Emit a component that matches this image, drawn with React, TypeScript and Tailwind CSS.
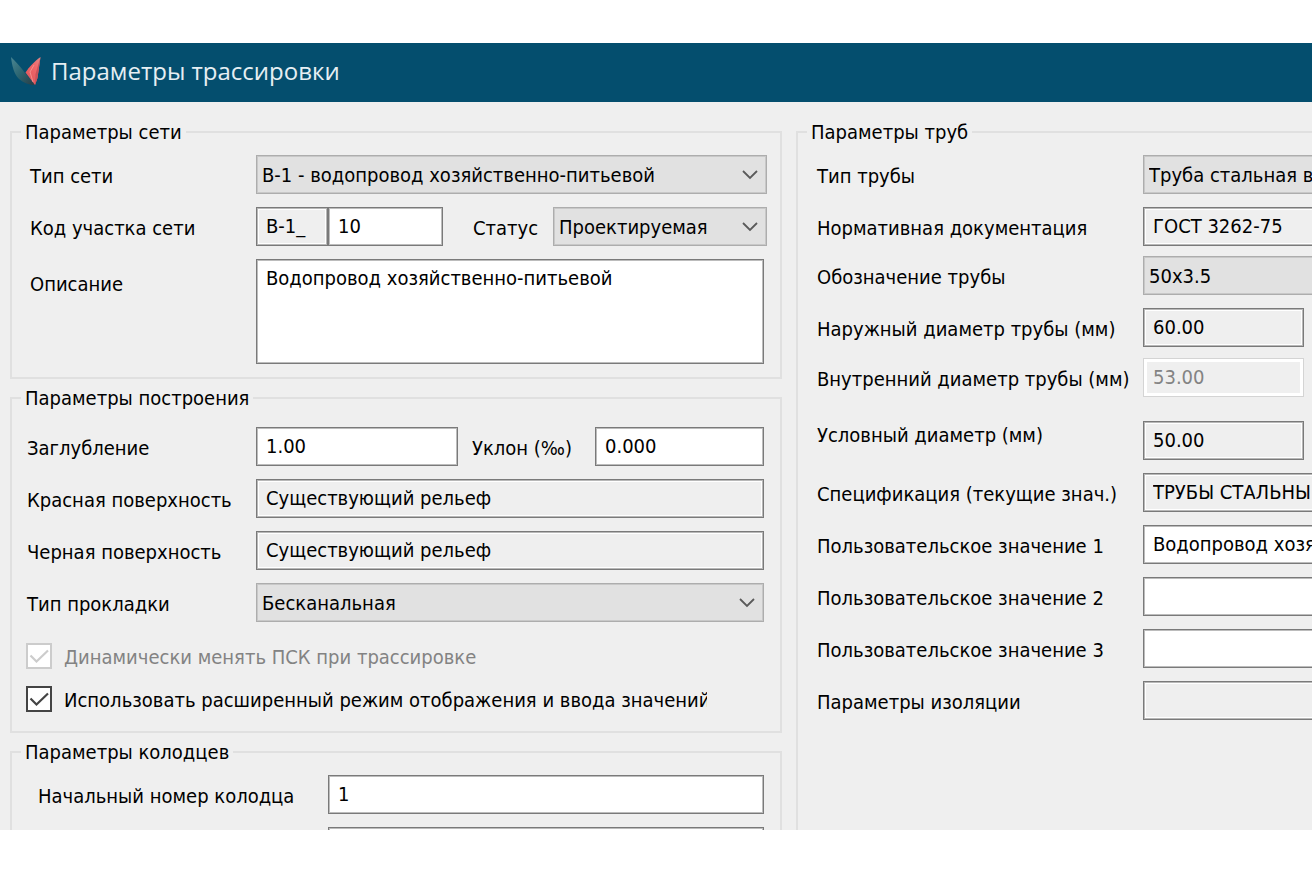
import { useState, type ReactNode } from 'react'
import clsx from 'clsx'

const TEXT = "font-['DejaVu_Sans_Condensed','DejaVu_Sans',sans-serif] text-[20px] leading-[24px]"

function Group({ title, open, className, children }: { title: string; open?: boolean; className?: string; children: ReactNode }) {
  return (
    <fieldset className={clsx('min-w-0 border-2 border-[#e0e0e0] px-[9px]', open && 'border-r-0 pr-0', className)}>
      <legend className="px-1">{title}</legend>
      {children}
    </fieldset>
  )
}

function Label({ id, className, children }: { id: string; className?: string; children: ReactNode }) {
  return <label htmlFor={id} className={clsx('shrink-0 whitespace-nowrap pt-[2px]', className)}>{children}</label>
}

type InputProps = { id: string; value?: string; readOnly?: boolean; disabled?: boolean; className?: string; label?: string }

function Input({ id, value = '', readOnly, disabled, className, label }: InputProps) {
  return (
    <input
      id={id}
      type="text"
      aria-label={label}
      defaultValue={value}
      readOnly={readOnly}
      disabled={disabled}
      className={clsx(
        'h-[39px] min-w-0 border pb-[2px] pl-[9px] outline-none',
        disabled && 'border-[#d4d4d4] bg-[#efefef] text-[#838383] shadow-[inset_0_0_0_3px_#fff]',
        readOnly && 'border-[#7a7a7a] bg-[#efefef] shadow-[inset_0_0_0_1px_#b8b8b8,inset_0_0_0_2px_#fff]',
        !readOnly && !disabled && 'border-[#7a7a7a] bg-white shadow-[inset_0_0_0_1px_#bcbcbc]',
        className,
      )}
    />
  )
}

function Select({ id, options, open, className }: { id: string; options: string[]; open?: boolean; className?: string }) {
  return (
    <div className={clsx('relative flex min-w-0', className)}>
      <select id={id} className={clsx('h-[39px] w-full min-w-0 appearance-none border border-[#adadad] bg-[#e1e1e1] pl-[5px] shadow-[inset_0_0_0_1px_#c8c8c8] outline-none', !open && 'pr-8')}>
        {options.map(o => <option key={o}>{o}</option>)}
      </select>
      {!open && (
        <svg viewBox="0 0 16 10" className="pointer-events-none absolute top-[15px] right-[9px] h-[10px] w-4" fill="none" stroke="#5a5a5a" strokeWidth="1.8">
          <path d="M1 1 L8 8 L15 1" />
        </svg>
      )}
    </div>
  )
}

function Check({ id, checked, disabled, className, children }: { id: string; checked: boolean; disabled?: boolean; className?: string; children: ReactNode }) {
  const [on, setOn] = useState(checked)
  return (
    <div className={clsx('flex h-[26px] items-center gap-3', disabled && 'text-[#838383]')}>
      <span className="relative flex shrink-0">
        <input id={id} type="checkbox" checked={on} disabled={disabled} onChange={e => setOn(e.target.checked)}
          className={clsx('size-[26px] appearance-none border-2 bg-white', disabled ? 'border-[#cccccc]' : 'border-[#444444]')} />
        {on && (
          <svg viewBox="0 0 26 26" className="pointer-events-none absolute inset-0 size-[26px]" fill="none" stroke={disabled ? '#cccccc' : '#444444'} strokeWidth="2.2">
            <path d="M4.5 12.5 L10.5 18.5 L22 7.5" />
          </svg>
        )}
      </span>
      <label htmlFor={id} className={clsx('overflow-hidden whitespace-nowrap pt-[2px]', className)}>{children}</label>
    </div>
  )
}

function Logo() {
  return (
    <svg viewBox="0 0 30 29" className="h-[29px] w-[30px]">
      <defs>
        <linearGradient id="wing" x1="0" y1="0" x2="1" y2="1">
          <stop offset="0" stopColor="#4b8794" />
          <stop offset="0.5" stopColor="#2b6470" />
          <stop offset="1" stopColor="#2a3a42" />
        </linearGradient>
        <linearGradient id="blade" x1="1" y1="0" x2="0.4" y2="1">
          <stop offset="0" stopColor="#d98a8c" />
          <stop offset="0.4" stopColor="#f0686a" />
          <stop offset="1" stopColor="#e0565b" />
        </linearGradient>
      </defs>
      <path d="M0 0 C5 5 10 10 14 16 L24 28 C18 28 13 26 8 22 C3 17 1 9 0 0 Z" fill="url(#wing)" />
      <path d="M29.5 0 C24 4 18 10 14.5 15.5 L24 28 L26.5 21 Z" fill="url(#blade)" />
      <path d="M29.5 0 L26.5 21 L24 28 L24.5 17 Z" fill="#c9525a" />
      <path d="M23 8 L19 15 L22 25" fill="none" stroke="#f59a97" strokeWidth="0.8" />
    </svg>
  )
}

type PipeRow = { id: string; label: string; value?: string; options?: string[]; readOnly?: boolean; disabled?: boolean; short?: boolean; top?: boolean }

const pipeGroups: { gap: string; rows: PipeRow[] }[] = [
  {
    gap: 'mt-[11px]',
    rows: [
      { id: 'pipe-type', label: 'Тип трубы', options: ['Труба стальная водогазопроводная'] },
      { id: 'pipe-doc', label: 'Нормативная документация', value: 'ГОСТ 3262-75', readOnly: true },
    ],
  },
  {
    gap: 'mt-[10px]',
    rows: [
      { id: 'pipe-mark', label: 'Обозначение трубы', options: ['50x3.5'] },
      { id: 'pipe-outer', label: 'Наружный диаметр трубы (мм)', value: '60.00', readOnly: true, short: true },
    ],
  },
  {
    gap: 'mt-[11px]',
    rows: [{ id: 'pipe-inner', label: 'Внутренний диаметр трубы (мм)', value: '53.00', disabled: true, short: true }],
  },
  {
    gap: 'mt-[24px]',
    rows: [
      { id: 'pipe-nominal', label: 'Условный диаметр (мм)', value: '50.00', readOnly: true, short: true, top: true },
      { id: 'pipe-spec', label: 'Спецификация (текущие знач.)', value: 'ТРУБЫ СТАЛЬНЫЕ', readOnly: true },
      { id: 'pipe-user1', label: 'Пользовательское значение 1', value: 'Водопровод хозяйственно-питьевой' },
      { id: 'pipe-user2', label: 'Пользовательское значение 2' },
      { id: 'pipe-user3', label: 'Пользовательское значение 3' },
      { id: 'pipe-insulation', label: 'Параметры изоляции', readOnly: true },
    ],
  },
]

// long fields run past the right edge of the window
function PipeField({ row }: { row: PipeRow }) {
  return (
    <div className={clsx('flex', row.top ? 'items-start' : 'items-center')}>
      <Label id={row.id} className="w-[326px]">{row.label}</Label>
      {row.options
        ? <Select id={row.id} options={row.options} open className="-mr-2 flex-1" />
        : <Input id={row.id} value={row.value} readOnly={row.readOnly} disabled={row.disabled} className={row.short ? 'w-[161px]' : '-mr-2 flex-1'} />}
    </div>
  )
}

export default function App() {
  return (
    <div className="flex h-screen flex-col bg-white pt-[43px] pb-[42px]">
      <div className={clsx('flex min-h-0 flex-1 flex-col overflow-hidden bg-[#efefef] text-black', TEXT)}>
        <header className="flex h-[59px] shrink-0 items-center gap-[10px] bg-[#044e6e] pb-[3px] pl-[11px]">
          <Logo />
          <h1 className="font-['Open_Sans','Noto_Sans',sans-serif] text-[24px] leading-[32px] text-[#e6eff3]">Параметры трассировки</h1>
        </header>

        <main className="grid flex-1 grid-cols-[minmax(0,772fr)_minmax(0,516fr)] gap-[14px] pt-[18px] pl-[10px]">
          <div className="flex flex-col gap-[7px]">
            <Group title="Параметры сети" className="pb-[13px]">
              <div className="mt-[11px] flex flex-col gap-[13px] pr-1 pl-[9px]">
                <div className="flex items-center">
                  <Label id="net-type" className="w-[226px]">Тип сети</Label>
                  <Select id="net-type" options={['В-1 - водопровод хозяйственно-питьевой']} className="flex-1" />
                </div>
                <div className="flex items-center">
                  <Label id="net-prefix" className="w-[226px]">Код участка сети</Label>
                  <Input id="net-prefix" value="В-1_" readOnly className="w-[72px]" />
                  <Input id="net-code" label="Номер участка" value="10" className="w-[115px]" />
                  <Label id="net-status" className="ml-[30px] w-20">Статус</Label>
                  <Select id="net-status" options={['Проектируемая']} className="flex-1" />
                </div>
                <div className="flex items-start pr-[3px]">
                  <Label id="net-note" className="mt-[11px] w-[226px]">Описание</Label>
                  <textarea id="net-note" defaultValue="Водопровод хозяйственно-питьевой" className="h-[105px] min-w-0 flex-1 resize-none border border-[#7a7a7a] bg-white px-[9px] py-[6px] shadow-[inset_0_0_0_1px_#bcbcbc] outline-none" />
                </div>
              </div>
            </Group>

            <Group title="Параметры построения" className="pb-[19px]">
              <div className="mt-[17px] flex flex-col gap-[13px] pr-[7px] pl-[6px]">
                <div className="flex items-center">
                  <Label id="depth" className="w-[229px]">Заглубление</Label>
                  <Input id="depth" value="1.00" className="w-[202px]" />
                  <Label id="slope" className="ml-[14px] w-[123px]">Уклон (‰)</Label>
                  <Input id="slope" value="0.000" className="flex-1" />
                </div>
                <div className="flex items-center">
                  <Label id="surface-red" className="w-[229px]">Красная поверхность</Label>
                  <Input id="surface-red" value="Существующий рельеф" readOnly className="flex-1" />
                </div>
                <div className="flex items-center">
                  <Label id="surface-black" className="w-[229px]">Черная поверхность</Label>
                  <Input id="surface-black" value="Существующий рельеф" readOnly className="flex-1" />
                </div>
                <div className="flex items-center">
                  <Label id="laying" className="w-[229px]">Тип прокладки</Label>
                  <Select id="laying" options={['Бесканальная']} className="flex-1" />
                </div>
              </div>
              <div className="mt-[21px] flex flex-col gap-[17px] pl-[5px]">
                <Check id="dynamic" checked disabled>Динамически менять ПСК при трассировке</Check>
                <Check id="extended" checked className="w-[643px]">Использовать расширенный режим отображения и ввода значений</Check>
              </div>
            </Group>

            <Group title="Параметры колодцев" className="pb-[13px]">
              <div className="mt-[11px] flex flex-col gap-[13px] pr-[7px] pl-[17px]">
                <div className="flex items-center">
                  <Label id="well-first" className="w-[290px]">Начальный номер колодца</Label>
                  <Input id="well-first" value="1" className="flex-1" />
                </div>
                <div className="flex items-center pl-[290px]">
                  <Input id="well-prefix" label="Префикс колодца" className="flex-1" />
                </div>
              </div>
            </Group>
          </div>

          <Group title="Параметры труб" open>
            {pipeGroups.map(g => (
              <div key={g.rows[0].id} className={clsx('flex flex-col gap-[13px] pl-[10px]', g.gap)}>
                {g.rows.map(r => <PipeField key={r.id} row={r} />)}
              </div>
            ))}
          </Group>
        </main>
      </div>
    </div>
  )
}
